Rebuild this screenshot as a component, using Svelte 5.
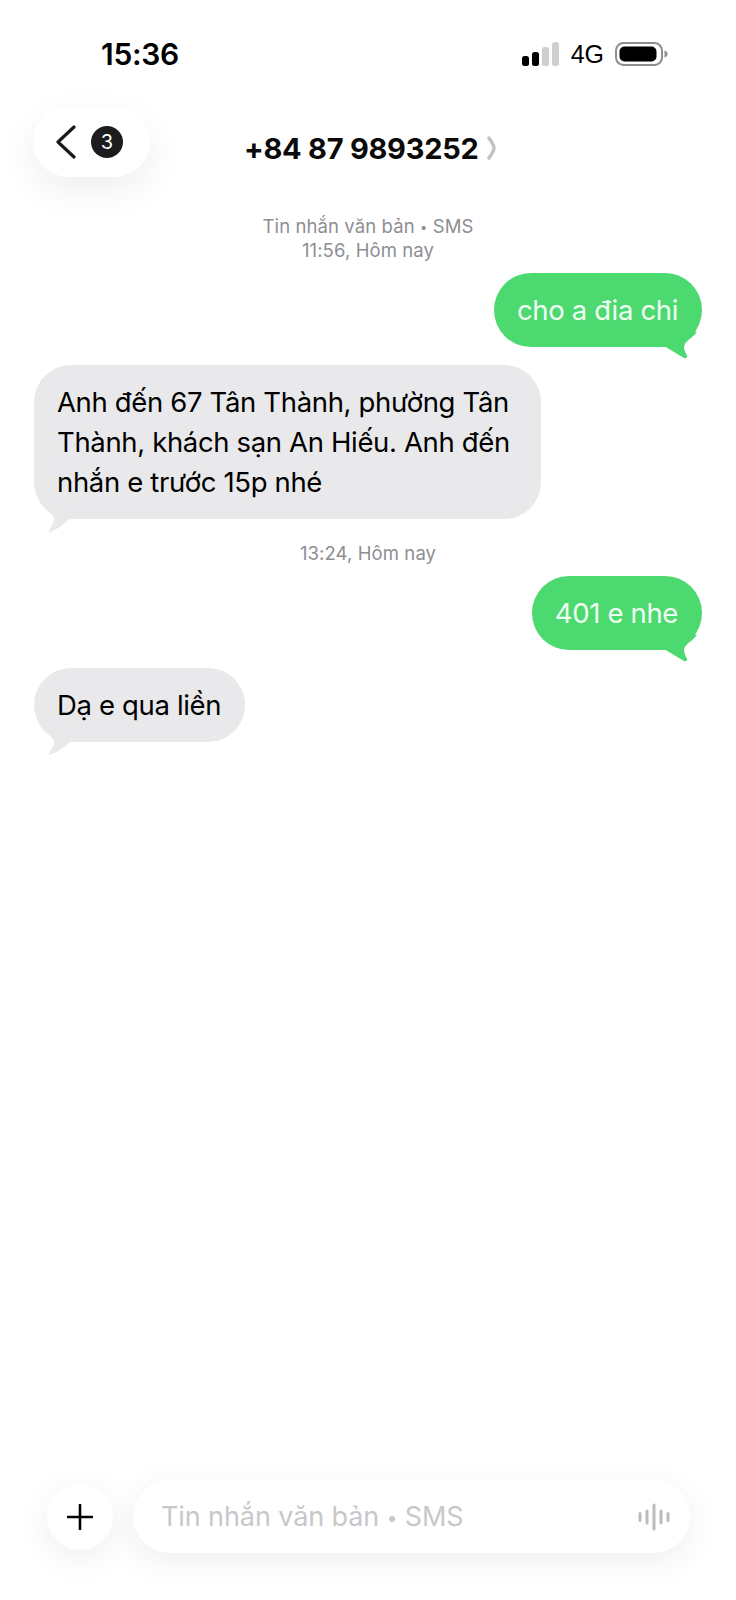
<script>
  const threads = [
    { sms: true, time: '11:56, Hôm nay', out: 'cho a đia chi', back: 'Anh đến 67 Tân Thành, phường Tân Thành, khách sạn An Hiếu. Anh đến nhắn e trước 15p nhé' },
    { sms: false, time: '13:24, Hôm nay', out: '401 e nhe', back: 'Dạ e qua liền' },
  ]
</script>

<div class="phone">
  <div class="status">
    <span class="clock">15:36</span>
    <div class="indicators">
      <svg width="38" height="24" viewBox="0 0 38 24">
        <rect x="0" y="14" width="7" height="10" rx="2.500" fill="#000" />
        <rect x="10" y="10" width="7" height="14" rx="2.500" fill="#000" />
        <rect x="20" y="5" width="7" height="19" rx="2.500" fill="#cfcfcf" />
        <rect x="30" y="0" width="7" height="24" rx="2.500" fill="#cfcfcf" />
      </svg>
      <span class="net">4G</span>
      <svg width="53" height="24" viewBox="0 0 53 24">
        <rect x="1" y="1" width="46" height="22" rx="7.500" fill="#fff" stroke="#8e8e8e" stroke-width="2" />
        <rect x="4.500" y="4.500" width="37" height="15" rx="5" fill="#000" />
        <path d="M49.500 8.500c2 .5 3 1.800 3 3.500s-1 3-3 3.500z" fill="#8e8e8e" />
      </svg>
    </div>
  </div>

  <header>
    <div class="back">
      <svg width="24" height="34" viewBox="0 0 24 34">
        <path d="M20 2 4 17l16 15" fill="none" stroke="#1a1a1a" stroke-width="3.200" stroke-linecap="round" stroke-linejoin="round" />
      </svg>
      <span class="count">3</span>
    </div>
    <div class="contact">
      <span>+84 87 9893252</span>
      <svg width="9" height="24" viewBox="0 0 9 24">
        <path d="M2 2c2.500 4 5 6.500 5 10s-2.500 6-5 10" fill="none" stroke="#c2c2c2" stroke-width="3.400" stroke-linecap="round" />
      </svg>
    </div>
  </header>

  <main>
    {#each threads as t}
      <div class="stamp">
        {#if t.sms}
          <div>Tin nhắn văn bản <span class="dot">•</span> SMS</div>
        {/if}
        <div>{t.time}</div>
      </div>
      <div class="bubble out">
        {t.out}
        <svg class="tail" width="50" height="32" viewBox="0 0 50 32">
          <path d="M12 19 32 31c2 .8 3.800-.6 3-2.500-2.800-5-4-9.500-1.500-12.500C37 12 41 10 45 5L12 0z" fill="#4cd970" />
        </svg>
      </div>
      <div class="bubble in">
        {t.back}
        <svg class="tail" width="50" height="32" viewBox="0 0 50 32">
          <path d="M6 2C10 9 21 14 20 20c-.8 4-3 7-5 10-.6 1.400.8 2 2 1.500C24 29 30 24 36 19L30 0z" fill="#e9e9eb" />
        </svg>
      </div>
    {/each}
  </main>

  <footer>
    <div class="plus">
      <svg width="26" height="26" viewBox="0 0 26 26">
        <path d="M13 1v24M1 13h24" fill="none" stroke="#000" stroke-width="2.600" stroke-linecap="round" />
      </svg>
    </div>
    <div class="input">
      <span>Tin nhắn văn bản <span class="dot">•</span> SMS</span>
      <svg width="32" height="28" viewBox="0 0 32 28">
        <path d="M2 10.500v7M9 8v12M16 2v24M23 8v12M30 10.500v7" fill="none" stroke="#bcbcbc" stroke-width="3" stroke-linecap="round" />
      </svg>
    </div>
  </footer>
</div>

<style>
  :global(body) {
    background: #fff;
  }
  .phone {
    width: 736px;
    height: 1600px;
    display: flex;
    flex-direction: column;
    font-family: Inter, "Liberation Sans", sans-serif;
    color: #000;
    background: #fff;
    overflow: hidden;
  }
  .status {
    display: flex;
    justify-content: space-between;
    align-items: center;
    padding: 38px 68px 0 101px;
    height: 32px;
  }
  .clock {
    font-size: 30px;
    font-weight: 600;
    letter-spacing: -0.3px;
  }
  .indicators {
    display: flex;
    align-items: center;
    gap: 11px;
  }
  .net {
    font-size: 25px;
    font-family: "Liberation Sans", sans-serif;
  }
  header {
    display: flex;
    margin-top: 37px;
    padding-left: 33px;
    height: 74px;
  }
  .back {
    width: 117px;
    height: 70px;
    box-sizing: border-box;
    display: flex;
    align-items: center;
    gap: 13px;
    padding: 0 0 0 21px;
    background: #fff;
    border-radius: 35px;
    box-shadow: 0 12px 36px rgba(0, 0, 0, 0.07);
  }
  .count {
    width: 32px;
    height: 32px;
    border-radius: 50%;
    background: #1c1c1e;
    color: #fff;
    font-size: 20px;
    line-height: 32px;
    text-align: center;
  }
  .contact {
    display: flex;
    align-items: center;
    gap: 9px;
    margin: 26px 0 0 94px;
    height: 30px;
    font-size: 29px;
    font-weight: 700;
    letter-spacing: -0.25px;
    color: #0a0a0a;
  }
  main {
    flex: 1;
    display: flex;
    flex-direction: column;
    padding: 34px 34px 0;
  }
  .stamp {
    align-self: center;
    text-align: center;
    font-size: 18.500px;
    line-height: 23px;
    letter-spacing: 0.1px;
    color: #8e8e93;
    margin-bottom: 11px;
  }
  .dot {
    font-size: 0.7em;
    vertical-align: 0.1em;
  }
  .bubble {
    position: relative;
    font-size: 27.500px;
    line-height: 40px;
    border-radius: 37px;
    padding: 17px 24px 17px 23px;
    letter-spacing: -0.35px;
  }
  .out {
    align-self: flex-end;
    background: #4cd970;
    color: #f0fff2;
  }
  .in {
    align-self: flex-start;
    max-width: 507px;
    box-sizing: border-box;
    background: #e9e9eb;
    color: #000;
    margin-top: 18px;
    margin-bottom: 23px;
  }
  .tail {
    position: absolute;
    bottom: -12px;
  }
  .out .tail {
    right: 0;
  }
  .in .tail {
    left: 0;
    bottom: -13px;
  }
  footer {
    display: flex;
    align-items: center;
    gap: 20px;
    padding: 0 46px 47px 47px;
  }
  .plus {
    flex: none;
    width: 66px;
    height: 66px;
    display: flex;
    align-items: center;
    justify-content: center;
    border-radius: 50%;
    background: #fff;
    box-shadow: 0 8px 34px rgba(0, 0, 0, 0.07);
  }
  .input {
    flex: 1;
    height: 73px;
    display: flex;
    align-items: center;
    justify-content: space-between;
    padding: 0 20px 0 28px;
    border-radius: 37px;
    background: #fff;
    box-shadow: 0 8px 34px rgba(0, 0, 0, 0.07);
    font-size: 27px;
    letter-spacing: -0.1px;
    color: #c7c7cc;
  }
</style>
